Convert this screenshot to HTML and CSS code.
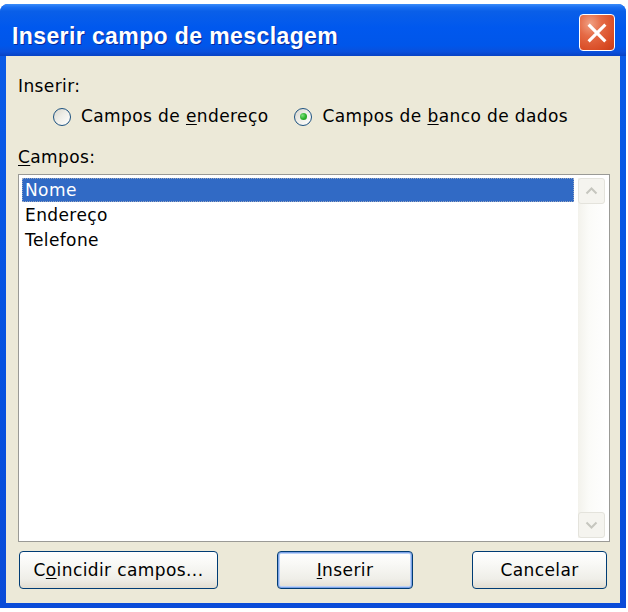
FILE: index.html
```html
<!DOCTYPE html>
<html lang="pt">
<head>
<meta charset="utf-8">
<title>Inserir campo de mesclagem</title>
<link rel="stylesheet" href="styles.css">
</head>
<body>
<div class="window">
  <div class="titlebar">
    <span class="title">Inserir campo de mesclagem</span>
    <button class="close" aria-label="Fechar">
      <svg width="35" height="36" viewBox="0 0 35 36"><path d="M10 10.5 L25 25.5 M25 10.5 L10 25.5" stroke="#fff" stroke-width="3.2" stroke-linecap="square" fill="none"/></svg>
    </button>
  </div>
  <div class="client">
    <div class="label">Inserir:</div>
    <div class="radios">
      <label class="radio"><span class="circle"></span><span>Campos de <u>e</u>ndereço</span></label>
      <label class="radio"><span class="circle checked"></span><span>Campos de <u>b</u>anco de dados</span></label>
    </div>
    <div class="label fields-label"><u>C</u>ampos:</div>
    <div class="listbox">
      <ul class="items">
        <li class="item selected">Nome</li>
        <li class="item">Endereço</li>
        <li class="item">Telefone</li>
      </ul>
      <div class="scrollbar">
        <div class="sbtn">
          <svg width="13" height="8" viewBox="0 0 13 8"><path d="M1.5 6.5 L6.5 1.5 L11.5 6.5" stroke="#c6c6bf" stroke-width="2" fill="none"/></svg>
        </div>
        <div class="track"></div>
        <div class="sbtn">
          <svg width="13" height="8" viewBox="0 0 13 8"><path d="M1.5 1.5 L6.5 6.5 L11.5 1.5" stroke="#c6c6bf" stroke-width="2" fill="none"/></svg>
        </div>
      </div>
    </div>
    <div class="buttons">
      <button class="btn btn-match">C<u>o</u>incidir campos...</button>
      <button class="btn btn-insert default"><u>I</u>nserir</button>
      <button class="btn btn-cancel">Cancelar</button>
    </div>
  </div>
</div>
</body>
</html>
```
FILE: styles.css
```css
html, body {
  margin: 0;
  padding: 0;
  background: #ffffff;
}

body {
  font-family: "DejaVu Sans", "Liberation Sans", sans-serif;
  font-size: 17px;
  line-height: 21px;
  letter-spacing: 0.4px;
  color: #000;
}

.window {
  margin-top: 4px;
  width: 626px;
  height: 604px;
  display: flex;
  flex-direction: column;
  border-radius: 8px 8px 0 0;
  background: linear-gradient(to bottom, #0a5ce8 0%, #0551e0 60%, #0a4bd8 100%);
  box-sizing: border-box;
}

.titlebar {
  height: 52px;
  flex: none;
  display: flex;
  align-items: flex-start;
  justify-content: space-between;
  padding: 0 11px 0 12px;
  border-radius: 8px 8px 0 0;
  background: linear-gradient(to bottom,
    #3b8cf8 0%, #1a6ff2 6%, #0a5fe8 14%, #0058ee 45%, #0056ea 80%, #0a50dc 92%, #0842c4 100%);
}

.title {
  font-family: "Liberation Sans", "DejaVu Sans", sans-serif;
  font-weight: bold;
  font-size: 23px;
  line-height: 26px;
  letter-spacing: 0.4px;
  color: #fff;
  text-shadow: 1px 1px 0 #0a2a9a;
  margin-top: 19px;
}

.close {
  width: 36px;
  height: 37px;
  padding: 0;
  margin: 10px 0 0 0;
  border: 1.5px solid #fff;
  border-radius: 4px;
  background: radial-gradient(ellipse at 30% 25%, #f0a083 0%, #e56a45 35%, #d84b24 75%, #c73c1a 100%);
  display: flex;
  align-items: center;
  justify-content: center;
  box-sizing: border-box;
}

.client {
  flex: 1;
  margin: 0 6px 5px 6px;
  background: #ece9d8;
  display: flex;
  flex-direction: column;
  padding: 20px 10px 14px 12px;
  box-sizing: border-box;
}

.label {
  height: 21px;
}

u {
  text-decoration: underline;
  text-underline-offset: 2px;
}

.radios {
  margin-top: 9px;
  padding-left: 35px;
  display: flex;
  gap: 26px;
  height: 21px;
}

.radio {
  display: flex;
  align-items: center;
  gap: 10px;
}

.circle {
  width: 18px;
  height: 18px;
  box-sizing: border-box;
  border-radius: 50%;
  border: 1px solid #1c5180;
  background: linear-gradient(135deg, #d8d6cc 0%, #eeede7 45%, #ffffff 100%);
  display: flex;
  align-items: center;
  justify-content: center;
}

.circle.checked::after {
  content: "";
  width: 7px;
  height: 7px;
  border-radius: 50%;
  background: radial-gradient(circle at 35% 35%, #7ee07e 0%, #2fb52f 50%, #169016 100%);
}

.fields-label {
  margin-top: 20px;
}

.listbox {
  margin-top: 6px;
  flex: 1;
  display: flex;
  border: 1px solid #9a9a96;
  background: #fff;
  padding: 3px;
  min-height: 0;
}

.items {
  list-style: none;
  margin: 0;
  padding: 0;
  flex: 1;
}

.item {
  height: 25px;
  line-height: 24px;
  padding-left: 3px;
  box-sizing: border-box;
}

.item.selected {
  height: 24px;
  margin-bottom: 1px;
  background: #316ac5;
  color: #fff;
  outline: 1px dotted #9aa7c0;
  outline-offset: -1px;
  margin-right: 4px;
  padding-left: 3px;
}

.scrollbar {
  width: 27px;
  display: flex;
  flex-direction: column;
  background: linear-gradient(to right, #f3f2ec 0%, #fbfbf8 40%, #fefefe 100%);
  margin-right: 1px;
}

.sbtn {
  height: 24px;
  border: 1px solid #e4e3dc;
  border-radius: 3px;
  background: #f5f4ef;
  display: flex;
  align-items: center;
  justify-content: center;
}

.track {
  flex: 1;
}

.buttons {
  margin-top: 9px;
  height: 38px;
  display: flex;
  justify-content: space-between;
  padding: 0 3px 0 1px;
}

.btn {
  font: inherit;
  letter-spacing: inherit;
  color: #000;
  height: 38px;
  padding: 0;
  border: 1px solid #003c74;
  border-radius: 4px;
  background: linear-gradient(to bottom, #ffffff 0%, #f8f8f5 35%, #efeee8 75%, #e2ddd1 100%);
  box-sizing: border-box;
}

.btn-match { width: 199px; }
.btn-insert { width: 136px; }
.btn-cancel { width: 135px; }

.btn.default {
  box-shadow: inset 0 0 0 1px #7da2e6, inset 0 0 0 2px #b9d1f7;
}
```
